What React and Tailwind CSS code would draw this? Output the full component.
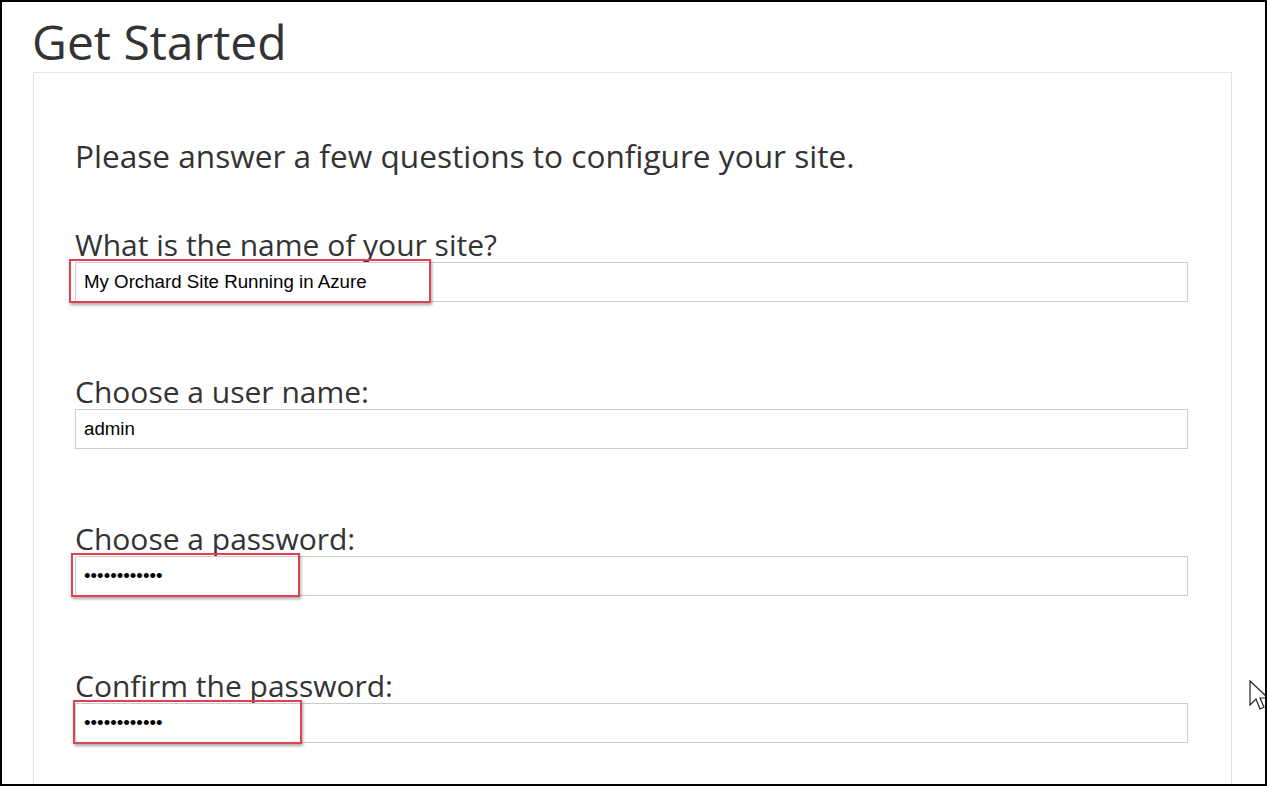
import React from "react";

const fields = [
  { label: "What is the name of your site?", value: "My Orchard Site Running in Azure", mark: "w-[362px] left-[-7px]" },
  { label: "Choose a user name:", value: "admin" },
  { label: "Choose a password:", value: "••••••••••••", mark: "w-[229px] left-[-5px]" },
  { label: "Confirm the password:", value: "••••••••••••", mark: "w-[229px] left-[-3px]" },
];

function Field({ label, value, mark }) {
  return (
    <div className="mb-[73px]">
      <div className="text-[30px] leading-[34px] text-[#333]">{label}</div>
      <div className="relative h-[40px] w-[1113px] border border-[#ccc] bg-white flex items-center px-[8px]">
        <span className="font-['Liberation_Sans',sans-serif] text-[18.7px] text-black">{value}</span>
        {mark && (
          <div
            className={
              "absolute top-[-4px] h-[44px] border-2 border-[#e0434f] shadow-[1px_2px_3px_rgba(0,0,0,0.35)] " + mark
            }
          />
        )}
      </div>
    </div>
  );
}

export default function App() {
  return (
    <div className="w-[1267px] h-[786px] overflow-hidden bg-white border-2 border-black font-['Open_Sans',sans-serif] relative">
      <h1 className="ml-[30px] mt-[10px] text-[48px] leading-[60px] text-[#333]">Get Started</h1>

      <div className="ml-[31px] w-[1199px] h-[800px] border border-[#e3e3e3] pl-[41px] pt-[63px]">
        <p className="text-[31.6px] leading-[40px] text-[#333] mb-[52px]">
          Please answer a few questions to configure your site.
        </p>
        {fields.map((f) => (
          <Field key={f.label} {...f} />
        ))}
      </div>

      {/* mouse pointer */}
      <svg className="absolute left-[1247px] top-[678px]" width="20" height="34" viewBox="0 0 20 34">
        <path d="M1 1 L1 25 L7 19 L11 29 L15 27 L11 18 L19 18 Z" fill="white" stroke="#222" strokeWidth="1.2" />
      </svg>
    </div>
  );
}
